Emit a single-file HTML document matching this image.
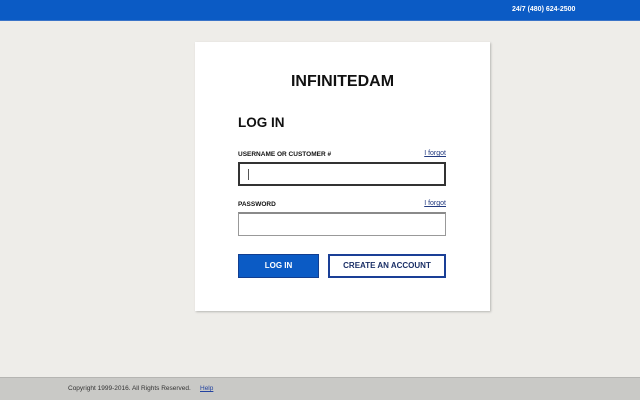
<!DOCTYPE html>
<html><head><style>
*{margin:0;padding:0;box-sizing:border-box}
body{width:640px;height:400px;background:#eeede9;font-family:"Liberation Sans",sans-serif;position:relative;overflow:hidden}
.top{position:absolute;left:0;top:0;width:640px;height:21px;background:#0b5bc5;border-bottom:1px solid #3a74c8}
.phone{position:absolute;left:512px;top:6px;color:#fff;font-size:7px;font-weight:bold}
.card{position:absolute;left:195px;top:42px;width:295px;height:269px;background:#fff;box-shadow:1px 1px 2px #b8b8b4}
.t{position:absolute;left:0;width:295px;text-align:center;top:31px;font-size:16px;font-weight:bold;color:#111}
.h{position:absolute;left:43px;top:73px;font-size:13.5px;font-weight:bold;color:#111}
.l{position:absolute;left:43px;font-size:6.5px;font-weight:bold;color:#111}
.f{position:absolute;right:44px;font-size:7px;color:#223a80;text-decoration:underline}
.i{position:absolute;left:43px;width:208px;height:24px;border:1px solid #999;border-top:2px solid #8a8a8a}
.b1{position:absolute;left:43px;top:212px;width:81px;height:24px;background:#0b5bc5;border:1px solid #123e90;color:#fff;font-size:8px;font-weight:bold;text-align:center;line-height:22px}
.b2{position:absolute;left:133px;top:212px;width:118px;height:24px;background:#fff;border:2px solid #1a3f96;color:#1a2f66;font-size:8px;font-weight:bold;text-align:center;line-height:20px}
.foot{position:absolute;left:0;top:377px;width:640px;height:23px;background:#c9c9c6;border-top:1px solid #b5b5b2}
.c{position:absolute;left:68px;top:7px;font-size:6.5px;color:#333}
.hp{position:absolute;left:200px;top:7px;font-size:6.5px;color:#2343a0;text-decoration:underline}
</style></head><body>
<div class="top"><div class="phone">24/7 (480) 624-2500</div></div>
<div class="card">
<div class="t">INFINITEDAM</div>
<div class="h">LOG IN</div>
<div class="l" style="top:109px">USERNAME OR CUSTOMER #</div>
<div class="f" style="top:108px">I forgot</div>
<div class="i" style="top:120px;border:2px solid #333"><div style="position:absolute;left:8px;top:5px;width:1px;height:11px;background:#555"></div></div>
<div class="l" style="top:159px">PASSWORD</div>
<div class="f" style="top:158px">I forgot</div>
<div class="i" style="top:170px"></div>
<div class="b1">LOG IN</div>
<div class="b2">CREATE AN ACCOUNT</div>
</div>
<div class="foot"><div class="c">Copyright 1999-2016. All Rights Reserved.</div><div class="hp">Help</div></div>
</body></html>
